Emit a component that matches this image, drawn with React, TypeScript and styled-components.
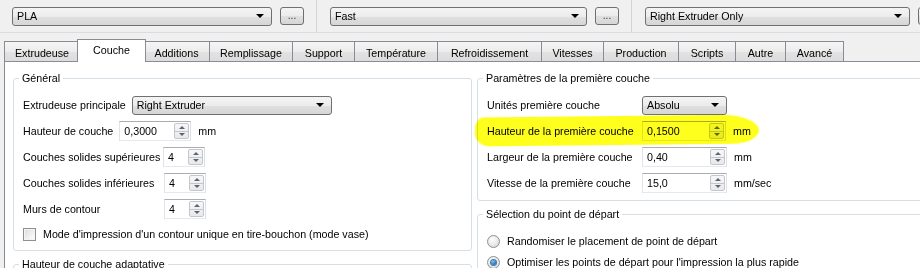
import React from 'react';
import styled, { createGlobalStyle, css } from 'styled-components';

const GlobalStyle = createGlobalStyle`
  html, body {
    margin: 0;
    padding: 0;
    overflow: hidden;
    background: #f0f0f0;
  }
  body {
    font-family: "Liberation Sans", Arial, sans-serif;
    font-size: 10.7px;
    color: #000;
  }
`;

const Window = styled.div`
  width: 960px;
  height: 268px;
  overflow: hidden;
  background: #f0f0f0;
`;

/* ---------- preset bar ---------- */

const TopBar = styled.div`
  display: flex;
  height: 32px;
  border-bottom: 1px solid #dcdcdc;
`;

const PresetGroup = styled.div<{ $w: number }>`
  box-sizing: border-box;
  width: ${p => p.$w}px;
  flex: none;
  display: flex;
  align-items: center;
  gap: 8px;
  padding: 0 12px;

  & + & {
    border-left: 1px solid #d4d4d4;
    padding-left: 13px;
  }
`;

const Combo = styled.div<{ $w?: number }>`
  box-sizing: border-box;
  height: 19px;
  width: ${p => (p.$w ? `${p.$w}px` : 'auto')};
  flex: ${p => (p.$w ? 'none' : '1')};
  border: 1px solid #707070;
  border-radius: 3px;
  background: linear-gradient(#f4f4f4, #ececec 50%, #e0e0e0 51%, #d6d6d6);
  display: flex;
  align-items: center;
  justify-content: space-between;
  padding: 0 7px 0 4px;
`;

const DropArrow = styled.span`
  width: 0;
  height: 0;
  border-left: 4px solid transparent;
  border-right: 4px solid transparent;
  border-top: 4px solid #000;
`;

const DotsButton = styled.div`
  box-sizing: border-box;
  width: 24px;
  height: 18px;
  flex: none;
  border: 1px solid #707070;
  border-radius: 3px;
  background: linear-gradient(#f4f4f4, #ececec 50%, #e0e0e0 51%, #d6d6d6);
  color: #333;
  font-size: 10px;
  display: flex;
  align-items: flex-end;
  justify-content: center;
  padding-bottom: 3px;
  line-height: 1;
`;

/* ---------- tabs ---------- */

const TabBar = styled.div`
  display: flex;
  align-items: flex-end;
  height: 22px;
  padding: 6px 0 0 4px;
`;

const Tab = styled.div<{ $w: number; $active?: boolean }>`
  box-sizing: border-box;
  width: ${p => p.$w + 1}px;
  height: 20px;
  flex: none;
  padding-top: 2px;
  margin-left: -1px;
  border: 1px solid #898c95;
  border-bottom: none;
  background: linear-gradient(#f5f5f5, #ececec 50%, #e2e2e2 51%, #dcdcdc);
  display: flex;
  align-items: center;
  justify-content: center;
  white-space: nowrap;

  &:first-child {
    margin-left: 0;
  }

  ${p =>
    p.$active &&
    css`
      width: ${p.$w + 5}px;
      height: 23px;
      margin: 0 -2px -1px -3px;
      padding: 0 0 2px;
      background: #fff;
      position: relative;
      z-index: 2;
    `}
`;

const Panel = styled.div`
  margin-left: 4px;
  height: 260px;
  background: #fff;
  border: 1px solid #898c95;
  padding: 10px 8px;
  display: grid;
  grid-template-columns: 459px 480px;
  column-gap: 5px;
  align-items: start;
`;

const Column = styled.div`
  display: flex;
  flex-direction: column;
  gap: 7px;
`;

/* ---------- group boxes ---------- */

const Group = styled.fieldset<{ $pt?: number; $gap?: number }>`
  margin: 0;
  min-width: 0;
  border: 1px solid #d5dfe5;
  border-radius: 3px;
  padding: ${p => p.$pt ?? 10}px 9px 7px;
  display: flex;
  flex-direction: column;
  gap: ${p => p.$gap ?? 6}px;
`;

const Legend = styled.legend`
  margin-left: -4px;
  padding: 0 3px;
  line-height: 13px;
`;

const Row = styled.div<{ $h?: number }>`
  position: relative;
  display: flex;
  align-items: center;
  gap: 6px;
  height: ${p => p.$h ?? 20}px;
  white-space: nowrap;
`;

const Label = styled.span<{ $w?: number }>`
  position: relative;
  flex: none;
  width: ${p => (p.$w ? `${p.$w}px` : 'auto')};
`;

const Unit = styled.span`
  position: relative;
  margin-left: 1px;
`;

/* ---------- spin box ---------- */

const SpinBox = styled.div<{ $w: number }>`
  position: relative;
  box-sizing: border-box;
  width: ${p => p.$w}px;
  height: 20px;
  flex: none;
  border: 1px solid;
  border-color: #abadb3 #dbdfe6 #e3e9ef #e2e3ea;
  background: #fff;
  display: flex;
  align-items: center;
  padding: 0 1px 0 4px;
`;

const SpinValue = styled.span`
  flex: 1;
`;

const SpinArrows = styled.div`
  box-sizing: border-box;
  width: 15px;
  height: 16px;
  border: 1px solid #c3c7cd;
  border-radius: 2px;
  background: linear-gradient(#f7f7f7, #e9e9e9);
  display: flex;
  flex-direction: column;
`;

const SpinHalf = styled.div<{ $down?: boolean }>`
  flex: 1;
  display: flex;
  align-items: center;
  justify-content: center;
  ${p => p.$down && 'border-top: 1px solid #c3c7cd;'}

  &::after {
    content: '';
    border-left: 3px solid transparent;
    border-right: 3px solid transparent;
    ${p => (p.$down ? 'border-top: 3px solid #5b6577;' : 'border-bottom: 3px solid #5b6577;')}
  }
`;

/* ---------- check / radio ---------- */

const CheckBox = styled.span`
  box-sizing: border-box;
  width: 13px;
  height: 13px;
  flex: none;
  border: 1px solid #8e8f8f;
  background: linear-gradient(135deg, #dcdcdc, #f5f5f5 70%, #fff);
  box-shadow: inset 0 0 0 1px #f4f4f4;
  margin-right: 1px;
`;

const Radio = styled.span<{ $checked?: boolean }>`
  box-sizing: border-box;
  width: 13px;
  height: 13px;
  flex: none;
  border-radius: 50%;
  border: 1px solid #8e8f8f;
  background: radial-gradient(circle at 40% 35%, #fff, #dcdcdc 80%);
  display: flex;
  align-items: center;
  justify-content: center;
  margin-right: 1px;

  ${p =>
    p.$checked &&
    css`
      &::after {
        content: '';
        width: 5px;
        height: 5px;
        border-radius: 50%;
        background: radial-gradient(circle at 40% 35%, #7fc3f4, #1c5d9e 80%);
        box-shadow: 0 0 0 1px #3a7bbf;
      }
    `}
`;

/* marker stroke drawn over the row */
const Highlight = styled.div`
  position: absolute;
  left: -12px;
  top: -5px;
  width: 284px;
  height: 29px;
  background: #ffff1e;
  border-radius: 10px 40px 30px 16px / 12px 60% 50% 14px;
  transform: rotate(-0.6deg);
  mix-blend-mode: multiply;
  filter: blur(0.6px);
  z-index: 3;
  pointer-events: none;
`;

const Spin: React.FC<{ w: number; value: string }> = ({ w, value }) => (
  <SpinBox $w={w}>
    <SpinValue>{value}</SpinValue>
    <SpinArrows>
      <SpinHalf />
      <SpinHalf $down />
    </SpinArrows>
  </SpinBox>
);

const tabs = [
  { name: 'Extrudeuse', w: 75 },
  { name: 'Couche', w: 64 },
  { name: 'Additions', w: 66 },
  { name: 'Remplissage', w: 83 },
  { name: 'Support', w: 62 },
  { name: 'Température', w: 83 },
  { name: 'Refroidissement', w: 104 },
  { name: 'Vitesses', w: 62 },
  { name: 'Production', w: 75 },
  { name: 'Scripts', w: 57 },
  { name: 'Autre', w: 50 },
  { name: 'Avancé', w: 58 },
];

const presets = [
  { w: 316, name: 'PLA' },
  { w: 315, name: 'Fast' },
  { w: 323, name: 'Right Extruder Only' },
];

export default function App() {
  return (
    <Window>
      <GlobalStyle />
      <TopBar>
        {presets.map(p => (
          <PresetGroup key={p.name} $w={p.w}>
            <Combo>
              <span>{p.name}</span>
              <DropArrow />
            </Combo>
            <DotsButton>...</DotsButton>
          </PresetGroup>
        ))}
      </TopBar>

      <TabBar>
        {tabs.map(t => (
          <Tab key={t.name} $w={t.w} $active={t.name === 'Couche'}>
            {t.name}
          </Tab>
        ))}
      </TabBar>

      <Panel>
        <Column>
          <Group>
            <Legend>Général</Legend>
            <Row>
              <Label>Extrudeuse principale</Label>
              <Combo $w={200}>
                <span>Right Extruder</span>
                <DropArrow />
              </Combo>
            </Row>
            <Row>
              <Label>Hauteur de couche</Label>
              <Spin w={72} value="0,3000" />
              <Unit>mm</Unit>
            </Row>
            <Row>
              <Label $w={134}>Couches solides supérieures</Label>
              <Spin w={42} value="4" />
            </Row>
            <Row>
              <Label $w={135}>Couches solides inférieures</Label>
              <Spin w={42} value="4" />
            </Row>
            <Row>
              <Label $w={135}>Murs de contour</Label>
              <Spin w={42} value="4" />
            </Row>
            <Row $h={18}>
              <CheckBox />
              <Label>Mode d'impression d'un contour unique en tire-bouchon (mode vase)</Label>
            </Row>
          </Group>
          <Group>
            <Legend>Hauteur de couche adaptative</Legend>
            <Row>
              <CheckBox />
              <Label>Utiliser une hauteur de couche adaptative</Label>
            </Row>
          </Group>
        </Column>

        <Column>
          <Group>
            <Legend>Paramètres de la première couche</Legend>
            <Row>
              <Label $w={149}>Unités première couche</Label>
              <Combo $w={85}>
                <span>Absolu</span>
                <DropArrow />
              </Combo>
            </Row>
            <Row>
              <Highlight />
              <Label $w={149}>Hauteur de la première couche</Label>
              <Spin w={84} value="0,1500" />
              <Unit>mm</Unit>
            </Row>
            <Row>
              <Label $w={149}>Largeur de la première couche</Label>
              <Spin w={85} value="0,40" />
              <Unit>mm</Unit>
            </Row>
            <Row>
              <Label $w={149}>Vitesse de la première couche</Label>
              <Spin w={85} value="15,0" />
              <Unit>mm/sec</Unit>
            </Row>
          </Group>
          <Group $pt={12} $gap={5}>
            <Legend>Sélection du point de départ</Legend>
            <Row $h={16}>
              <Radio />
              <Label>Randomiser le placement de point de départ</Label>
            </Row>
            <Row $h={16}>
              <Radio $checked />
              <Label>Optimiser les points de départ pour l'impression la plus rapide</Label>
            </Row>
          </Group>
        </Column>
      </Panel>
    </Window>
  );
}
